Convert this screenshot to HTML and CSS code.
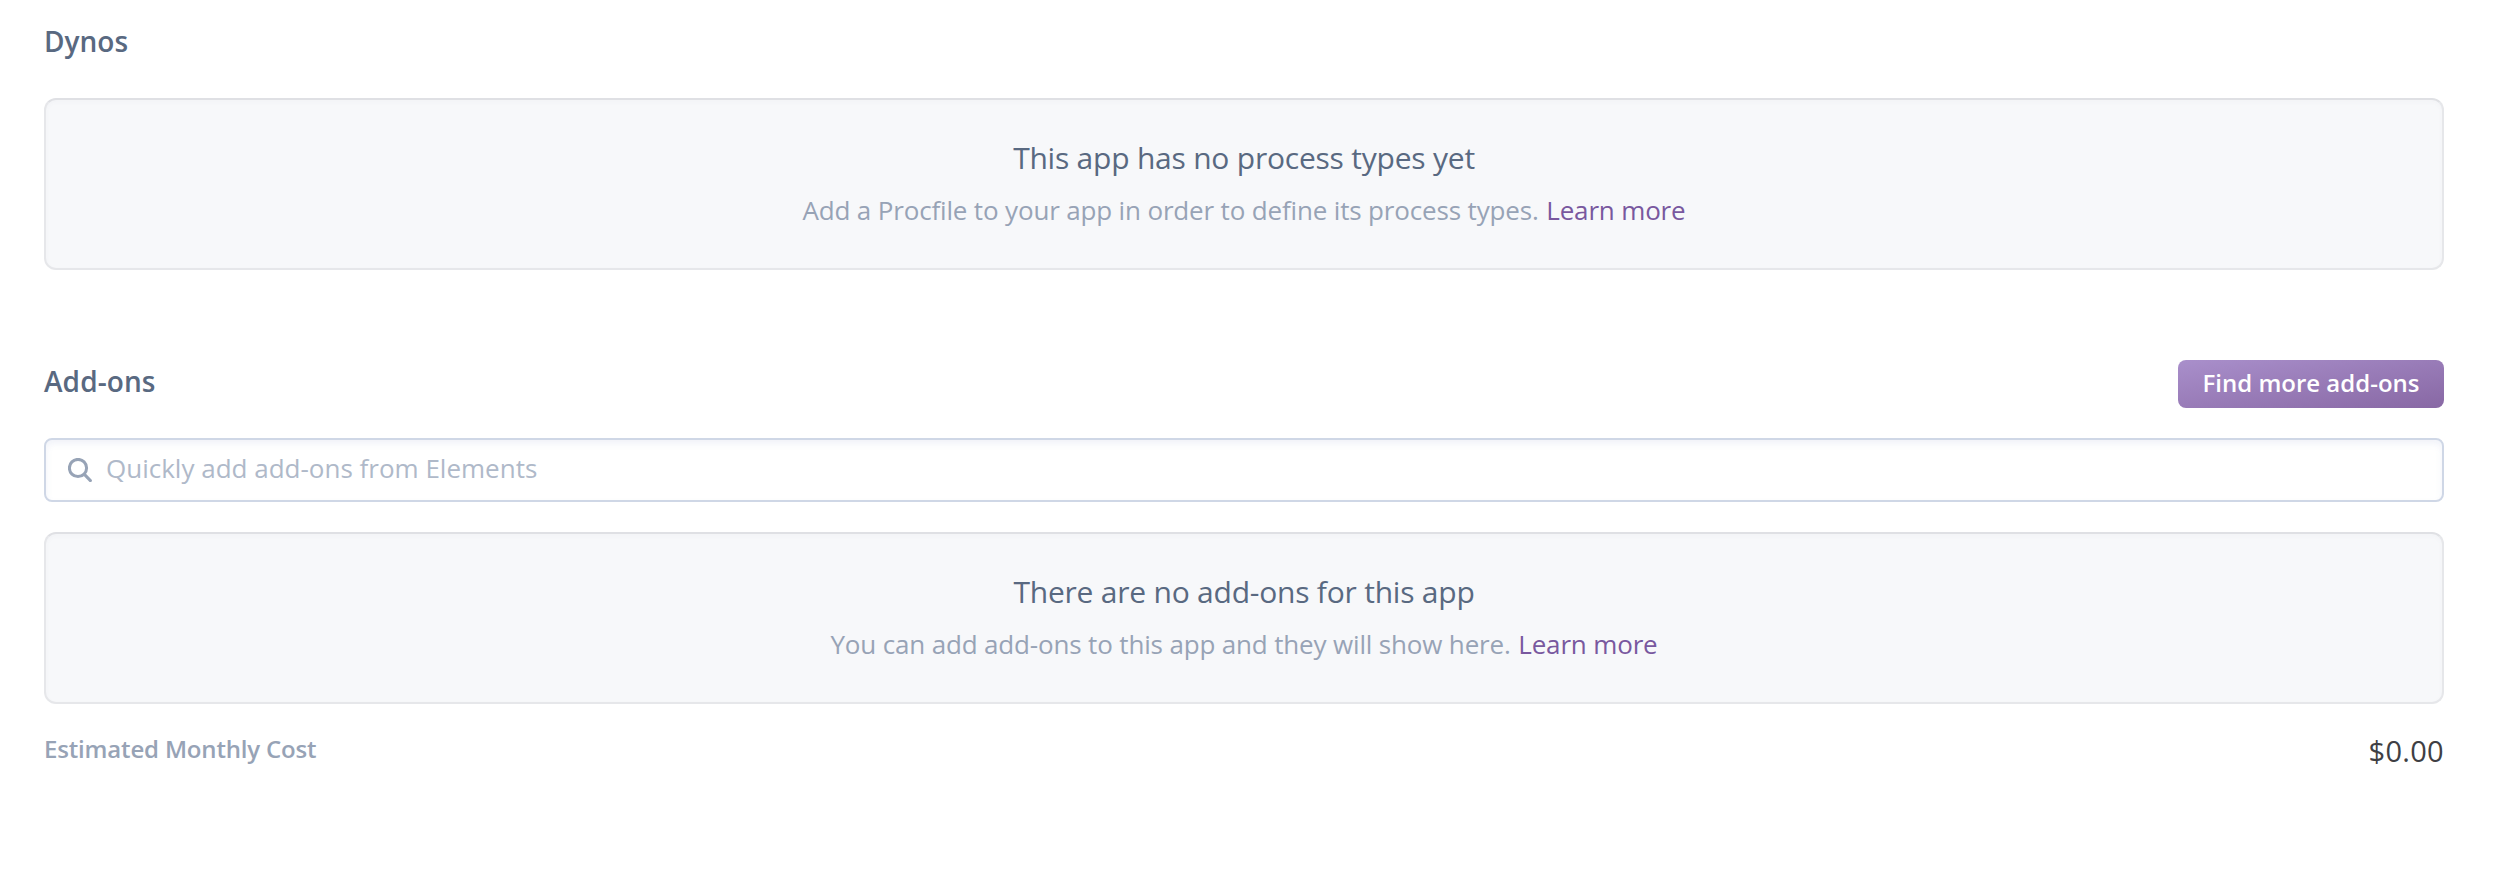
FILE: index.html
```html
<!DOCTYPE html>
<html lang="en">
<head>
<meta charset="utf-8">
<title>Resources</title>
<link rel="stylesheet" href="styles.css">
</head>
<body>
<main class="page">
  <section class="dynos">
    <header class="section-head"><h2 class="heading">Dynos</h2></header>
    <div class="empty">
      <h3 class="empty-title">This app has no process types yet</h3>
      <p class="empty-text">Add a Procfile to your app in order to define its process types. <a class="link" href="#">Learn more</a></p>
    </div>
  </section>
  <section class="addons">
    <header class="section-head">
      <h2 class="heading">Add-ons</h2>
      <button class="button" type="button">Find more add-ons</button>
    </header>
    <label class="search">
      <svg class="search-icon" viewBox="0 0 24 24" width="24" height="24" fill="none" stroke="#97a3b6" stroke-width="3" stroke-linecap="round"><circle cx="10" cy="10" r="8.6"/><path d="M16.4 16.4l6 6.2"/></svg>
      <input class="search-input" type="text" placeholder="Quickly add add-ons from Elements">
    </label>
    <div class="empty">
      <h3 class="empty-title">There are no add-ons for this app</h3>
      <p class="empty-text">You can add add-ons to this app and they will show here. <a class="link" href="#">Learn more</a></p>
    </div>
    <footer class="cost">
      <span class="cost-label">Estimated Monthly Cost</span>
      <span class="cost-value">$0.00</span>
    </footer>
  </section>
</main>
</body>
</html>
```
FILE: styles.css
```css
* { box-sizing: border-box; }
body { margin: 0; background: #fff; font-family: "Open Sans", "Noto Sans", sans-serif; }
h2, h3, p { margin: 0; }
.page { padding: 18px 76px 0 44px; }
.section-head { display: flex; justify-content: space-between; align-items: flex-start; height: 48px; }
.heading { font-size: 28px; line-height: 46px; font-weight: 600; color: #596981; }
.addons .heading { line-height: 42px; letter-spacing: .1px; }
.empty {
  height: 172px; padding-top: 38px; text-align: center;
  background: #f7f8fa; border: 2px solid #e6e7ea; border-top-color: #dfe0e4; border-radius: 12px;
  box-shadow: inset 0 2px 4px rgba(90, 100, 130, .03);
}
.dynos .empty { margin-top: 32px; }
.empty-title { font-size: 30px; line-height: 40px; font-weight: 400; letter-spacing: -.22px; color: #596981; }
.empty-text { margin-top: 14px; font-size: 26px; line-height: 36px; letter-spacing: -.16px; color: #97a3b6; }
.link { margin-left: 1px; color: #79589f; text-decoration: none; }
.addons { margin-top: 90px; }
.button {
  width: 266px; height: 48px; padding: 0 0 2px; border: 0; border-radius: 8px;
  background: linear-gradient(to bottom right, #a98fcb, #8868a4); color: #fff;
  font: 600 24px/46px "Open Sans", "Noto Sans", sans-serif;
}
.search {
  display: flex; align-items: center; gap: 14px; height: 64px; margin: 30px 0; padding: 0 22px;
  background: #fff; border: 2px solid #cfd7e6; border-radius: 8px;
  box-shadow: inset 0 4px 6px rgba(120, 140, 200, .1);
}
.search-icon { flex: none; }
.search-input {
  flex: 1; padding: 0 0 4px; border: 0; outline: 0; background: transparent;
  font: 26px/36px "Open Sans", "Noto Sans", sans-serif; color: #596981;
}
.search-input::placeholder { color: #afb9c9; opacity: 1; }
.cost { display: flex; justify-content: space-between; align-items: flex-start; margin-top: 27px; }
.cost-label { font-size: 24px; line-height: 36px; font-weight: 600; letter-spacing: -.17px; color: #97a3b6; }
.cost-value { margin-top: 2px; font-size: 29px; line-height: 36px; letter-spacing: .3px; color: #3f3f44; }
```
